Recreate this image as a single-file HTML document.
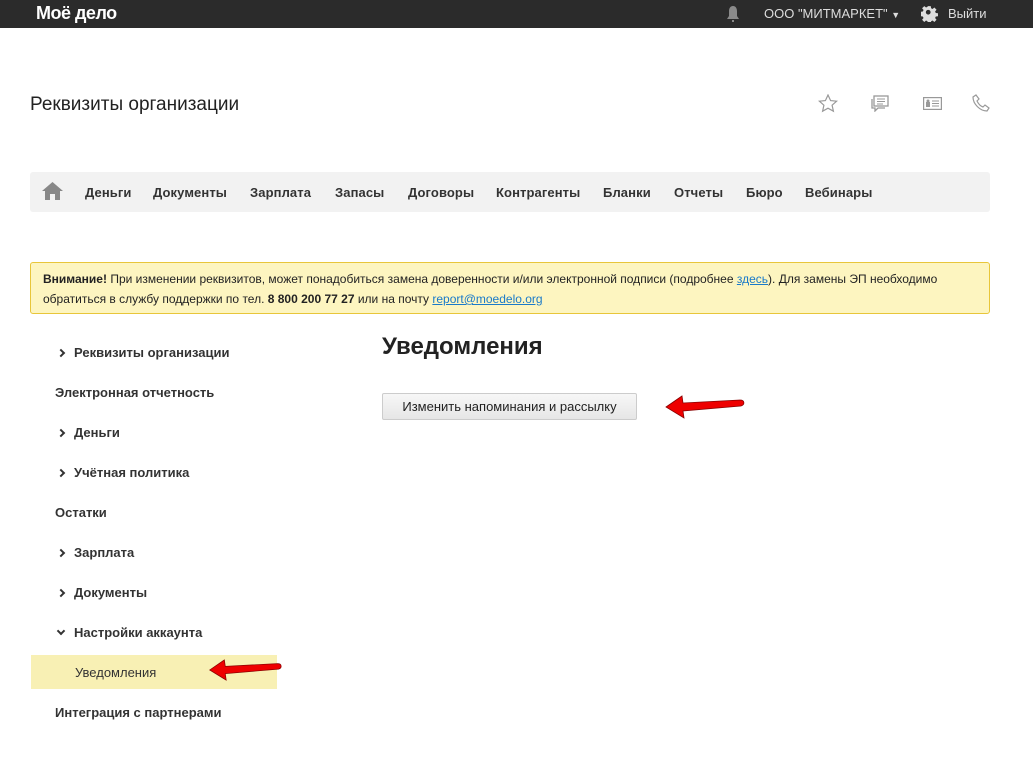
<!DOCTYPE html>
<html><head><meta charset="utf-8"><style>
*{margin:0;padding:0;box-sizing:border-box}
body{width:1033px;height:773px;background:#fff;font-family:"Liberation Sans",Arial,sans-serif;position:relative;overflow:hidden;color:#333}
.top{position:absolute;left:0;top:0;width:1033px;height:28px;background:#2b2b2b;color:#fff}
.abs{position:absolute}
.nav{position:absolute;left:30px;top:172px;width:960px;height:40px;background:#f2f2f2;border-radius:3px}
.nav span{position:absolute;top:13px;font-size:13px;font-weight:bold;color:#333;letter-spacing:0.1px}
.alert{position:absolute;left:30px;top:262px;width:960px;height:52px;background:#fdf5c0;border:1px solid #e8c63a;border-radius:3px;font-size:12px;color:#222;padding:6px 12px;line-height:20px}
.alert a{color:#1a7ac9;text-decoration:underline}
.side{position:absolute;left:55px;font-size:13px;font-weight:bold;color:#333}
.chev{display:inline-block;width:6px;height:6px;border-right:2px solid #333;border-bottom:2px solid #333;transform:rotate(-45deg);margin-right:10px;position:relative;top:-1px}
.chev.d{transform:rotate(45deg);top:-3px}
</style></head><body>
<div class="top">
<div class="abs" style="left:36px;top:3px;font-size:18px;font-weight:bold;letter-spacing:-0.5px">Моё дело</div>
<svg class="abs" style="left:725px;top:5px" width="16" height="18" viewBox="0 0 16 18"><path d="M8 1c-3 0-4 3-4 5v5l-2 3h12l-2-3V6c0-2-1-5-4-5z" fill="#8a8a8a"/><rect x="7" y="15" width="2" height="2" fill="#8a8a8a"/></svg>
<div class="abs" style="left:764px;top:6px;font-size:13px;color:#ddd">ООО "МИТМАРКЕТ" <span style="font-size:9px">▼</span></div>
<svg class="abs" style="left:921px;top:5px" width="17" height="17" viewBox="0 0 20 20"><path d="M8 0h4l.5 3 2 1 2.5-2 3 3-2 2.5 1 2 3 .5v4l-3 .5-1 2 2 2.5-3 3-2.5-2-2 1-.5 3H8l-.5-3-2-1-2.5 2-3-3 2-2.5-1-2-3-.5V8l3-.5 1-2-2-2.5 3-3 2.5 2 2-1z" fill="#ddd" transform="scale(.85) translate(1.5 1.5)"/><circle cx="8.5" cy="8.5" r="2.8" fill="#2b2b2b"/></svg>
<div class="abs" style="left:948px;top:6px;font-size:13px;color:#ddd">Выйти</div>
</div>
<div class="abs" style="left:30px;top:94px;font-size:19px;color:#222">Реквизиты организации</div>
<svg class="abs" style="left:818px;top:94px" width="20" height="19" viewBox="0 0 20 19"><path d="M10 1l2.6 5.6 6 .6-4.5 4 1.3 6L10 14.2 4.6 17.2l1.3-6-4.5-4 6-.6z" fill="none" stroke="#999" stroke-width="1.2"/></svg>
<svg class="abs" style="left:870px;top:95px" width="20" height="17" viewBox="0 0 20 17"><rect x="4" y="1" width="14" height="10" fill="none" stroke="#999" stroke-width="1.3"/><path d="M2 4v9h3v3l3-3h7" fill="none" stroke="#999" stroke-width="1.3"/><path d="M7 4h8M7 6.5h8M7 9h6" stroke="#999"/></svg>
<svg class="abs" style="left:923px;top:97px" width="19" height="13" viewBox="0 0 19 13"><rect x="0.6" y="0.6" width="17.8" height="11.8" fill="none" stroke="#999" stroke-width="1.2"/><rect x="3" y="5" width="4" height="5" fill="#999"/><circle cx="5" cy="4" r="1.5" fill="#999"/><path d="M9 4h7M9 6.5h7M9 9h7" stroke="#999"/></svg>
<svg class="abs" style="left:972px;top:94px" width="18" height="18" viewBox="0 0 18 18"><path d="M4 1l3 4-2 2c1 2 3 5 6 6l2-2 4 3-2 3C8 17 1 10 1 3z" fill="none" stroke="#999" stroke-width="1.2"/></svg>
<div class="nav">
<svg class="abs" style="left:12px;top:10px" width="21" height="18" viewBox="0 0 21 18"><path d="M10.5 0L0 9h3v9h5v-6h5v6h5V9h3z" fill="#888"/></svg>
<span style="left:55px">Деньги</span><span style="left:123px">Документы</span><span style="left:220px">Зарплата</span><span style="left:305px">Запасы</span><span style="left:378px">Договоры</span><span style="left:466px">Контрагенты</span><span style="left:573px">Бланки</span><span style="left:644px">Отчеты</span><span style="left:716px">Бюро</span><span style="left:775px">Вебинары</span>
</div>
<div class="alert"><b>Внимание!</b> При изменении реквизитов, может понадобиться замена доверенности и/или электронной подписи (подробнее <a>здесь</a>). Для замены ЭП необходимо обратиться в службу поддержки по тел. <b>8 800 200 77 27</b> или на почту <a>report@moedelo.org</a></div>
<div class="side" style="top:345px;left:58px"><i class="chev"></i>Реквизиты организации</div>
<div class="side" style="top:385px">Электронная отчетность</div>
<div class="side" style="top:425px;left:58px"><i class="chev"></i>Деньги</div>
<div class="side" style="top:465px;left:58px"><i class="chev"></i>Учётная политика</div>
<div class="side" style="top:505px">Остатки</div>
<div class="side" style="top:545px;left:58px"><i class="chev"></i>Зарплата</div>
<div class="side" style="top:585px;left:58px"><i class="chev"></i>Документы</div>
<div class="side" style="top:625px;left:58px"><i class="chev d"></i>Настройки аккаунта</div>
<div class="abs" style="left:31px;top:655px;width:246px;height:34px;background:#f8f0b4"></div>
<div class="abs" style="left:75px;top:665px;font-size:13px;color:#333">Уведомления</div>
<div class="side" style="top:705px">Интеграция с партнерами</div>
<div class="abs" style="left:382px;top:333px;font-size:24px;font-weight:bold;color:#222">Уведомления</div>
<div class="abs" style="left:382px;top:393px;width:255px;height:27px;border:1px solid #ccc;border-radius:2px;background:linear-gradient(#f7f7f7,#e6e6e6);font-size:13px;color:#222;text-align:center;line-height:25px">Изменить напоминания и рассылку</div>
<svg class="abs" style="left:662px;top:394px" width="85" height="26" viewBox="0 0 85 26"><path d="M4 13L20 2l1 7 57-3c5 0 5 5 1 6L21 17l1 7z" fill="#e00" stroke="#800" stroke-width="0.8"/></svg>
<svg class="abs" style="left:206px;top:657px" width="78" height="26" viewBox="0 0 85 26"><path d="M4 13L20 2l1 7 57-3c5 0 5 5 1 6L21 17l1 7z" fill="#e00" stroke="#800" stroke-width="0.8"/></svg>
</body></html>
